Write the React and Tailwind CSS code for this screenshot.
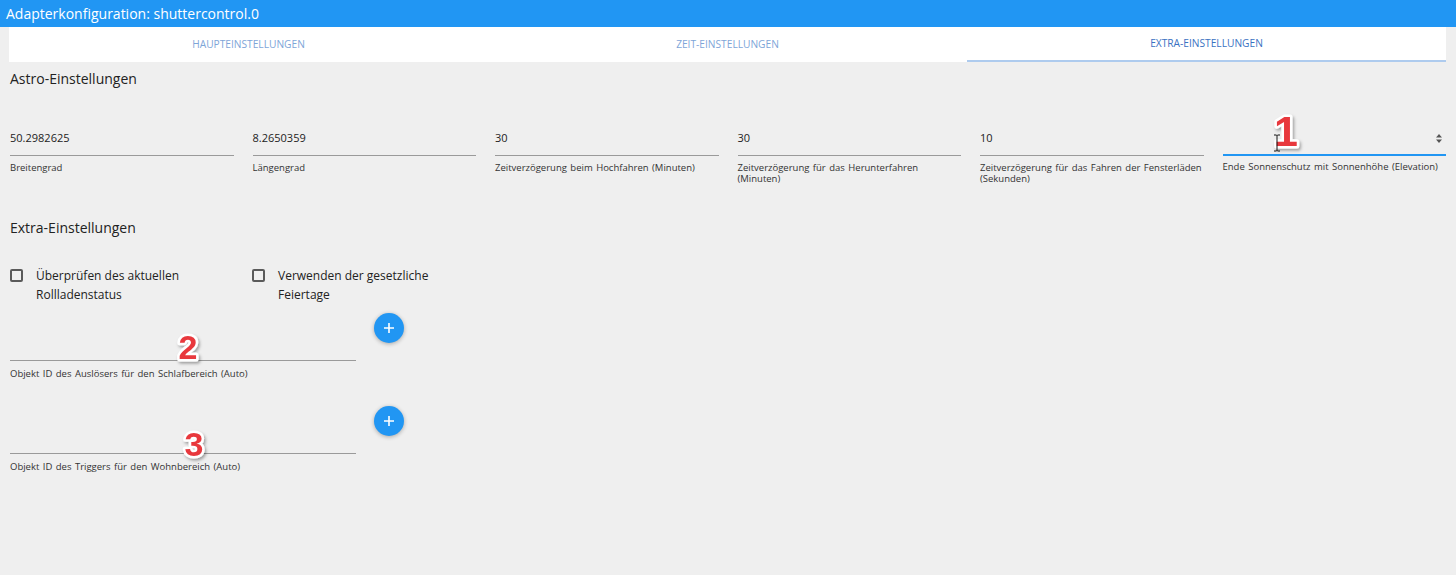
import React from 'react';

const fields = [
  { value: '50.2982625', label: 'Breitengrad' },
  { value: '8.2650359', label: 'Längengrad' },
  { value: '30', label: 'Zeitverzögerung beim Hochfahren (Minuten)' },
  { value: '30', label: 'Zeitverzögerung für das Herunterfahren (Minuten)' },
  { value: '10', label: 'Zeitverzögerung für das Fahren der Fensterläden (Sekunden)' },
  { value: '', label: 'Ende Sonnenschutz mit Sonnenhöhe (Elevation)', focused: true },
];

// red step number drawn over the screenshot
const Marker = ({ n, size, className }) => (
  <svg className={'absolute pointer-events-none ' + className} width="60" height="60" viewBox="0 0 60 60">
    <defs>
      <filter id={'sh' + n} x="-50%" y="-50%" width="200%" height="200%">
        <feDropShadow dx="1.5" dy="2" stdDeviation="1.5" floodColor="#000" floodOpacity="0.35" />
      </filter>
    </defs>
    <text
      x="30"
      y={30 + size * 0.358}
      textAnchor="middle"
      fontFamily="'Liberation Sans', Arial, sans-serif"
      fontWeight="700"
      fontSize={size}
      fill="#e8383d"
      stroke="#ffffff"
      strokeWidth="5"
      strokeLinejoin="round"
      paintOrder="stroke"
      filter={`url(#sh${n})`}
    >
      {n}
    </text>
  </svg>
);

const PlusButton = () => (
  <button className="w-[30px] h-[30px] rounded-full bg-[#2196f3] flex items-center justify-center shadow-[0_1px_4px_rgba(0,0,0,0.3)] shrink-0">
    <svg width="12" height="12" viewBox="0 0 12 12">
      <path d="M6 1v10M1 6h10" stroke="#fff" strokeWidth="1.6" />
    </svg>
  </button>
);

const IdField = ({ label }) => (
  <div className="flex items-start">
    <div className="w-[346px] mt-[21px]">
      <div className="h-[27px] border-b border-[#9a9a9a]" />
      <div className="mt-[7px] text-[9.5px] leading-[12px] text-[#333] [word-spacing:1px]">{label}</div>
    </div>
    <div className="ml-[18px]">
      <PlusButton />
    </div>
  </div>
);

const Checkbox = ({ label }) => (
  <div className="flex items-start">
    <div className="w-[13px] h-[13px] mt-[3px] border-2 border-[#5a5a5a] rounded-[2px] shrink-0" />
    <div className="ml-[13px] w-[190px] text-[12px] leading-[19px] text-[#222]">{label}</div>
  </div>
);

export default function App() {
  return (
    <div className="relative w-[1456px] h-[575px] bg-[#efefef] overflow-hidden" style={{ fontFamily: "'Open Sans', 'Noto Sans', sans-serif" }}>
      <div className="h-[27px] bg-[#2196f3] text-white text-[14px] leading-[27px] pl-[6px]">
        Adapterkonfiguration: shuttercontrol.0
      </div>

      <div className="ml-[9px] mr-[10px] h-[35px] bg-white flex text-[10.2px] uppercase">
        <div className="flex-1 flex items-center justify-center text-[#7ea5d8]">Haupteinstellungen</div>
        <div className="flex-1 flex items-center justify-center text-[#7ea5d8]">Zeit-Einstellungen</div>
        <div className="flex-1 flex items-center justify-center text-[#3a72c2] border-b-2 border-[#aecbee]">Extra-Einstellungen</div>
      </div>

      <div className="pl-[10px] pr-[10px]">
        <div className="mt-[7px] text-[14px] leading-[20px] text-[#222]">Astro-Einstellungen</div>

        <div className="mt-[39px] h-[90px] grid grid-cols-6 gap-x-[19px]">
          {fields.map((f, i) => (
            <div key={i}>
              <div
                className={
                  'h-[28px] flex items-start justify-between text-[11px] leading-[20px] text-[#222] ' +
                  (f.focused ? 'border-b-2 border-[#2196f3]' : 'border-b border-[#9a9a9a]')
                }
              >
                <span>{f.value}</span>
                {f.focused && (
                  <svg className="mt-[6px] mr-[4px]" width="6" height="9" viewBox="0 0 6 9">
                    <path d="M3 0L6 3.5H0z M3 9L0 5.5h6z" fill="#555" />
                  </svg>
                )}
              </div>
              <div className={'text-[9.5px] leading-[11px] text-[#333] [word-spacing:1px] ' + (f.focused ? 'mt-[5px]' : 'mt-[6px]')}>{f.label}</div>
            </div>
          ))}
        </div>

        <div className="text-[14px] leading-[20px] text-[#222]">Extra-Einstellungen</div>

        <div className="mt-[28px] flex">
          <div className="w-[242px]">
            <Checkbox label="Überprüfen des aktuellen Rollladenstatus" />
          </div>
          <div>
            <Checkbox label="Verwenden der gesetzliche Feiertage" />
          </div>
        </div>

        <div className="mt-[9px]">
          <IdField label="Objekt ID des Auslösers für den Schlafbereich (Auto)" />
        </div>
        <div className="mt-[26px]">
          <IdField label="Objekt ID des Triggers für den Wohnbereich (Auto)" />
        </div>
      </div>

      <Marker n="1" size={43} className="left-[1256px] top-[101px]" />
      <Marker n="2" size={34} className="left-[158px] top-[317px]" />
      <Marker n="3" size={34} className="left-[164px] top-[414px]" />

      <svg className="absolute left-[1273px] top-[134px] pointer-events-none" width="8" height="18" viewBox="0 0 8 18">
        <path d="M1 1h2.5l0.5 0.6 0.5-0.6H7M4 1.5v15M1 17h2.5l0.5-0.6 0.5 0.6H7" stroke="#111" strokeWidth="1" fill="none" />
      </svg>
    </div>
  );
}
